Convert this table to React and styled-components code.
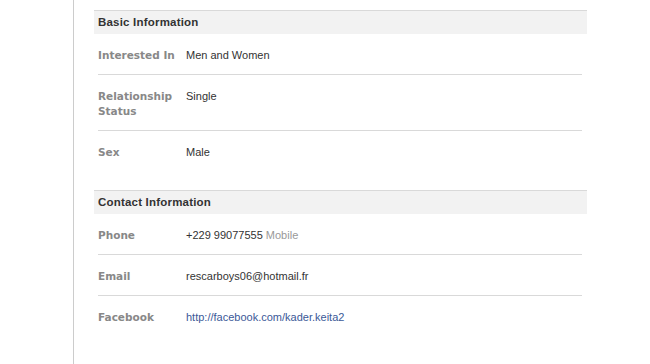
import React from 'react';
import styled, { createGlobalStyle } from 'styled-components';

const GlobalStyle = createGlobalStyle`
  body {
    margin: 0;
    background: #fff;
    font-family: "Liberation Sans", Arial, sans-serif;
    font-size: 11px;
    color: #333;
  }
`;

const Page = styled.div`
  display: flex;
  height: 364px;
  overflow: hidden;
`;

const Column = styled.div`
  margin-left: 73px;
  border-left: 1px solid #cccccc;
  padding: 10px 0 0 20px;
  width: 493px;
`;

const Section = styled.div`
  margin-bottom: 19px;
`;

const SectionHeader = styled.div`
  height: 23px;
  line-height: 23px;
  padding: 0 4px;
  background: #f2f2f2;
  border-top: 1px solid #d9d9d9;
  font-size: 11.5px;
  font-weight: bold;
  letter-spacing: 0.2px;
  color: #333;
`;

const Rows = styled.div`
  margin: 0 5px 0 4px;
`;

const Row = styled.div`
  display: flex;
  padding: 14px 0 11px;
  line-height: 15px;
  & + & {
    border-top: 1px solid #d9d9d9;
  }
`;

const Label = styled.div`
  width: 88px;
  flex-shrink: 0;
  font-family: "DejaVu Sans", Verdana, sans-serif;
  font-size: 10.5px;
  font-weight: bold;
  color: #888;
`;

const Value = styled.div`
  flex: 1;
  color: #333;
`;

const Muted = styled.span`
  color: #999;
`;

const Link = styled.a`
  color: #3b5998;
  text-decoration: none;
`;

const basic = [
  { label: 'Interested In', value: 'Men and Women' },
  { label: <>Relationship<br />Status</>, value: 'Single' },
  { label: 'Sex', value: 'Male' },
];

const contact = [
  { label: 'Phone', value: <>+229 99077555 <Muted>Mobile</Muted></> },
  { label: 'Email', value: 'rescarboys06@hotmail.fr' },
  {
    label: 'Facebook',
    value: <Link href="#">http://facebook.com/kader.keita2</Link>,
  },
];

function InfoSection({ title, items }) {
  return (
    <Section>
      <SectionHeader>{title}</SectionHeader>
      <Rows>
        {items.map((item, i) => (
          <Row key={i}>
            <Label>{item.label}</Label>
            <Value>{item.value}</Value>
          </Row>
        ))}
      </Rows>
    </Section>
  );
}

export default function App() {
  return (
    <Page>
      <GlobalStyle />
      <Column>
        <InfoSection title="Basic Information" items={basic} />
        <InfoSection title="Contact Information" items={contact} />
      </Column>
    </Page>
  );
}
